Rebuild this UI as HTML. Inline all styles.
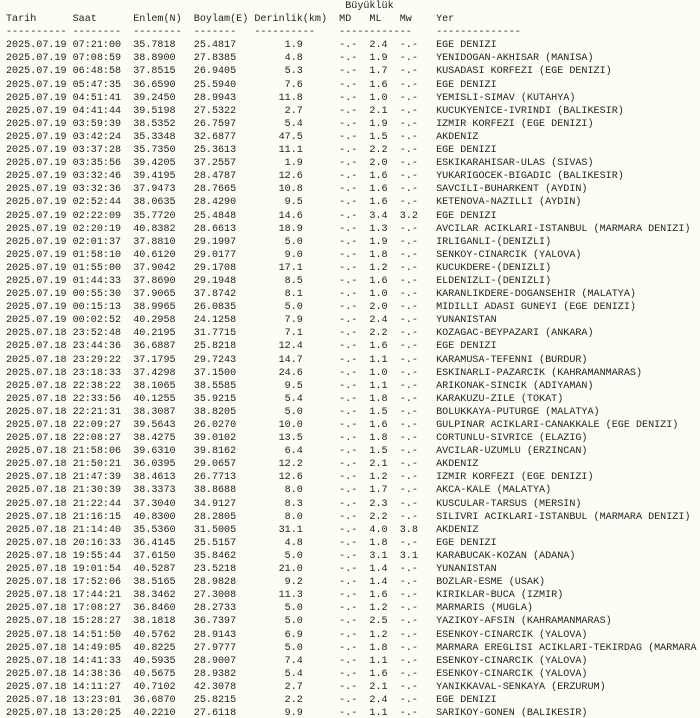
<!DOCTYPE html>
<html><head><meta charset="utf-8"><style>
html,body{margin:0;padding:0;background:#fdfdf6;width:700px;height:718px;overflow:hidden}
pre{margin:0 0 0 6px;font-family:"Liberation Mono","DejaVu Sans Mono",monospace;font-size:10.1px;line-height:13.1px;color:#222;white-space:pre;width:694px;overflow:hidden}
</style></head><body><pre>                                                        Büyüklük
Tarih      Saat      Enlem(N)  Boylam(E) Derinlik(km)  MD   ML   Mw    Yer
---------- --------  --------  -------   ----------    ------------    --------------
2025.07.19 07:21:00  35.7818   25.4817        1.9      -.-  2.4  -.-   EGE DENIZI
2025.07.19 07:08:59  38.8900   27.8385        4.8      -.-  1.9  -.-   YENIDOGAN-AKHISAR (MANISA)
2025.07.19 06:48:58  37.8515   26.9405        5.3      -.-  1.7  -.-   KUSADASI KORFEZI (EGE DENIZI)
2025.07.19 05:47:35  36.6590   25.5940        7.6      -.-  1.6  -.-   EGE DENIZI
2025.07.19 04:51:41  39.2450   28.9943       11.8      -.-  1.0  -.-   YEMISLI-SIMAV (KUTAHYA)
2025.07.19 04:41:44  39.5198   27.5322        2.7      -.-  2.1  -.-   KUCUKYENICE-IVRINDI (BALIKESIR)
2025.07.19 03:59:39  38.5352   26.7597        5.4      -.-  1.9  -.-   IZMIR KORFEZI (EGE DENIZI)
2025.07.19 03:42:24  35.3348   32.6877       47.5      -.-  1.5  -.-   AKDENIZ
2025.07.19 03:37:28  35.7350   25.3613       11.1      -.-  2.2  -.-   EGE DENIZI
2025.07.19 03:35:56  39.4205   37.2557        1.9      -.-  2.0  -.-   ESKIKARAHISAR-ULAS (SIVAS)
2025.07.19 03:32:46  39.4195   28.4787       12.6      -.-  1.6  -.-   YUKARIGOCEK-BIGADIC (BALIKESIR)
2025.07.19 03:32:36  37.9473   28.7665       10.8      -.-  1.6  -.-   SAVCILI-BUHARKENT (AYDIN)
2025.07.19 02:52:44  38.0635   28.4290        9.5      -.-  1.6  -.-   KETENOVA-NAZILLI (AYDIN)
2025.07.19 02:22:09  35.7720   25.4848       14.6      -.-  3.4  3.2   EGE DENIZI
2025.07.19 02:20:19  40.8382   28.6613       18.9      -.-  1.3  -.-   AVCILAR ACIKLARI-ISTANBUL (MARMARA DENIZI)
2025.07.19 02:01:37  37.8810   29.1997        5.0      -.-  1.9  -.-   IRLIGANLI-(DENIZLI)
2025.07.19 01:58:10  40.6120   29.0177        9.0      -.-  1.8  -.-   SENKOY-CINARCIK (YALOVA)
2025.07.19 01:55:00  37.9042   29.1708       17.1      -.-  1.2  -.-   KUCUKDERE-(DENIZLI)
2025.07.19 01:44:33  37.8690   29.1948        8.5      -.-  1.6  -.-   ELDENIZLI-(DENIZLI)
2025.07.19 00:55:30  37.9065   37.8742        8.1      -.-  1.0  -.-   KARANLIKDERE-DOGANSEHIR (MALATYA)
2025.07.19 00:15:13  38.9965   26.0835        5.0      -.-  2.0  -.-   MIDILLI ADASI GUNEYI (EGE DENIZI)
2025.07.19 00:02:52  40.2958   24.1258        7.9      -.-  2.4  -.-   YUNANISTAN
2025.07.18 23:52:48  40.2195   31.7715        7.1      -.-  2.2  -.-   KOZAGAC-BEYPAZARI (ANKARA)
2025.07.18 23:44:36  36.6887   25.8218       12.4      -.-  1.6  -.-   EGE DENIZI
2025.07.18 23:29:22  37.1795   29.7243       14.7      -.-  1.1  -.-   KARAMUSA-TEFENNI (BURDUR)
2025.07.18 23:18:33  37.4298   37.1500       24.6      -.-  1.0  -.-   ESKINARLI-PAZARCIK (KAHRAMANMARAS)
2025.07.18 22:38:22  38.1065   38.5585        9.5      -.-  1.1  -.-   ARIKONAK-SINCIK (ADIYAMAN)
2025.07.18 22:33:56  40.1255   35.9215        5.4      -.-  1.8  -.-   KARAKUZU-ZILE (TOKAT)
2025.07.18 22:21:31  38.3087   38.8205        5.0      -.-  1.5  -.-   BOLUKKAYA-PUTURGE (MALATYA)
2025.07.18 22:09:27  39.5643   26.0270       10.0      -.-  1.6  -.-   GULPINAR ACIKLARI-CANAKKALE (EGE DENIZI)
2025.07.18 22:08:27  38.4275   39.0102       13.5      -.-  1.8  -.-   CORTUNLU-SIVRICE (ELAZIG)
2025.07.18 21:58:06  39.6310   39.8162        6.4      -.-  1.5  -.-   AVCILAR-UZUMLU (ERZINCAN)
2025.07.18 21:50:21  36.0395   29.0657       12.2      -.-  2.1  -.-   AKDENIZ
2025.07.18 21:47:39  38.4613   26.7713       12.6      -.-  1.2  -.-   IZMIR KORFEZI (EGE DENIZI)
2025.07.18 21:30:39  38.3373   38.8688        8.0      -.-  1.7  -.-   AKCA-KALE (MALATYA)
2025.07.18 21:22:44  37.3040   34.9127        8.3      -.-  2.3  -.-   KUSCULAR-TARSUS (MERSIN)
2025.07.18 21:16:15  40.8300   28.2805        8.0      -.-  2.2  -.-   SILIVRI ACIKLARI-ISTANBUL (MARMARA DENIZI)
2025.07.18 21:14:40  35.5360   31.5005       31.1      -.-  4.0  3.8   AKDENIZ
2025.07.18 20:16:33  36.4145   25.5157        4.8      -.-  1.8  -.-   EGE DENIZI
2025.07.18 19:55:44  37.6150   35.8462        5.0      -.-  3.1  3.1   KARABUCAK-KOZAN (ADANA)
2025.07.18 19:01:54  40.5287   23.5218       21.0      -.-  1.4  -.-   YUNANISTAN
2025.07.18 17:52:06  38.5165   28.9828        9.2      -.-  1.4  -.-   BOZLAR-ESME (USAK)
2025.07.18 17:44:21  38.3462   27.3008       11.3      -.-  1.6  -.-   KIRIKLAR-BUCA (IZMIR)
2025.07.18 17:08:27  36.8460   28.2733        5.0      -.-  1.2  -.-   MARMARIS (MUGLA)
2025.07.18 15:28:27  38.1818   36.7397        5.0      -.-  2.5  -.-   YAZIKOY-AFSIN (KAHRAMANMARAS)
2025.07.18 14:51:50  40.5762   28.9143        6.9      -.-  1.2  -.-   ESENKOY-CINARCIK (YALOVA)
2025.07.18 14:49:05  40.8225   27.9777        5.0      -.-  1.8  -.-   MARMARA EREGLISI ACIKLARI-TEKIRDAG (MARMARA
2025.07.18 14:41:33  40.5935   28.9007        7.4      -.-  1.1  -.-   ESENKOY-CINARCIK (YALOVA)
2025.07.18 14:38:36  40.5675   28.9382        5.4      -.-  1.6  -.-   ESENKOY-CINARCIK (YALOVA)
2025.07.18 14:11:27  40.7102   42.3078        2.7      -.-  2.1  -.-   YANIKKAVAL-SENKAYA (ERZURUM)
2025.07.18 13:23:01  36.6870   25.8215        2.2      -.-  2.4  -.-   EGE DENIZI
2025.07.18 13:20:25  40.2210   27.6118        9.9      -.-  1.1  -.-   SARIKOY-GONEN (BALIKESIR)
</pre></body></html>
